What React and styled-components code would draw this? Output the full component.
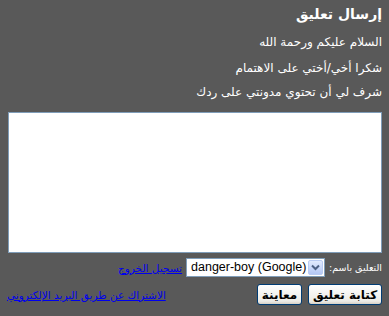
import React from "react";
import styled, { createGlobalStyle } from "styled-components";

const Global = createGlobalStyle`
  html, body { margin: 0; padding: 0; background: #595959; }
  body { font-family: "DejaVu Sans", "Noto Sans", sans-serif; }
`;

const Panel = styled.div`
  direction: rtl;
  width: 389px;
  height: 316px;
  box-sizing: border-box;
  padding: 4px 7px 0 7px;
  color: #fff;
  font-size: 12px;
`;

const Title = styled.h4`
  margin: 0;
  font-size: 14px;
  font-weight: bold;
  line-height: 20px;
`;

const Message = styled.p`
  margin: ${(p) => p.$top}px 0 0 0;
  line-height: 16px;
`;

const TextArea = styled.textarea`
  display: block;
  box-sizing: border-box;
  width: 374px;
  height: 141px;
  margin: 12px 0 0 0;
  border: 1px solid #7f9db9;
  background: #fff;
  resize: none;
  padding: 2px;
  outline: none;
`;

const IdentityRow = styled.div`
  display: flex;
  align-items: center;
  gap: 4px;
  margin-top: 5px;
  height: 19px;
`;

const Label = styled.span`
  font-size: 9.5px;
`;

const Select = styled.div`
  display: flex;
  direction: ltr;
  align-items: stretch;
  width: 139px;
  height: 19px;
  box-sizing: border-box;
  border: 1px solid #7f9db9;
  background: #fff;
  color: #000;
  font-family: "Liberation Sans", Arial, sans-serif;
  font-size: 12.5px;
`;

const SelectText = styled.span`
  flex: 1;
  padding-left: 4px;
  line-height: 17px;
  white-space: nowrap;
`;

const Arrow = styled.span`
  width: 15px;
  margin: 1px;
  border-radius: 2px;
  background: linear-gradient(#e1eafe, #b4c8f6);
  border: 1px solid #b9cbf3;
  box-sizing: border-box;
  display: flex;
  align-items: center;
  justify-content: center;
`;

const Link = styled.a`
  color: #0000ee;
  text-decoration: underline;
  font-size: ${(p) => p.$size || 10}px;
`;

const ActionRow = styled.div`
  display: flex;
  align-items: center;
  margin-top: 7px;
`;

const Button = styled.button`
  height: 21px;
  box-sizing: border-box;
  width: ${(p) => p.$w}px;
  margin-left: 6px;
  padding: 0;
  border: 1px solid #003c74;
  border-radius: 3px;
  background: linear-gradient(#ffffff, #ecebe6 85%, #d6d0c5);
  font-family: "DejaVu Sans", sans-serif;
  font-size: 12px;
  font-weight: bold;
  color: #000;
`;

const Spacer = styled.div`
  flex: 1;
`;

export default function App() {
  return (
    <>
      <Global />
      <Panel>
        <Title>إرسال تعليق</Title>
        <Message $top={10}>السلام عليكم ورحمة الله</Message>
        <Message $top={10}>شكرا أخي/أختي على الاهتمام</Message>
        <Message $top={8}>شرف لي أن تحتوي مدونتي على ردك</Message>
        <TextArea />
        <IdentityRow>
          <Label>التعليق باسم:</Label>
          <Select>
            <SelectText>danger-boy (Google)</SelectText>
            <Arrow>
              <svg width="9" height="7" viewBox="0 0 9 7">
                <path d="M1 1.5 L4.5 5 L8 1.5" fill="none" stroke="#4d6185" strokeWidth="2" />
              </svg>
            </Arrow>
          </Select>
          <Link href="#" $size={10.5}>تسجيل الخروج</Link>
        </IdentityRow>
        <ActionRow>
          <Button $w={74}>كتابة تعليق</Button>
          <Button $w={45}>معاينة</Button>
          <Spacer />
          <Link href="#" $size={10.5}>الاشتراك عن طريق البريد الإلكتروني</Link>
        </ActionRow>
      </Panel>
    </>
  );
}
